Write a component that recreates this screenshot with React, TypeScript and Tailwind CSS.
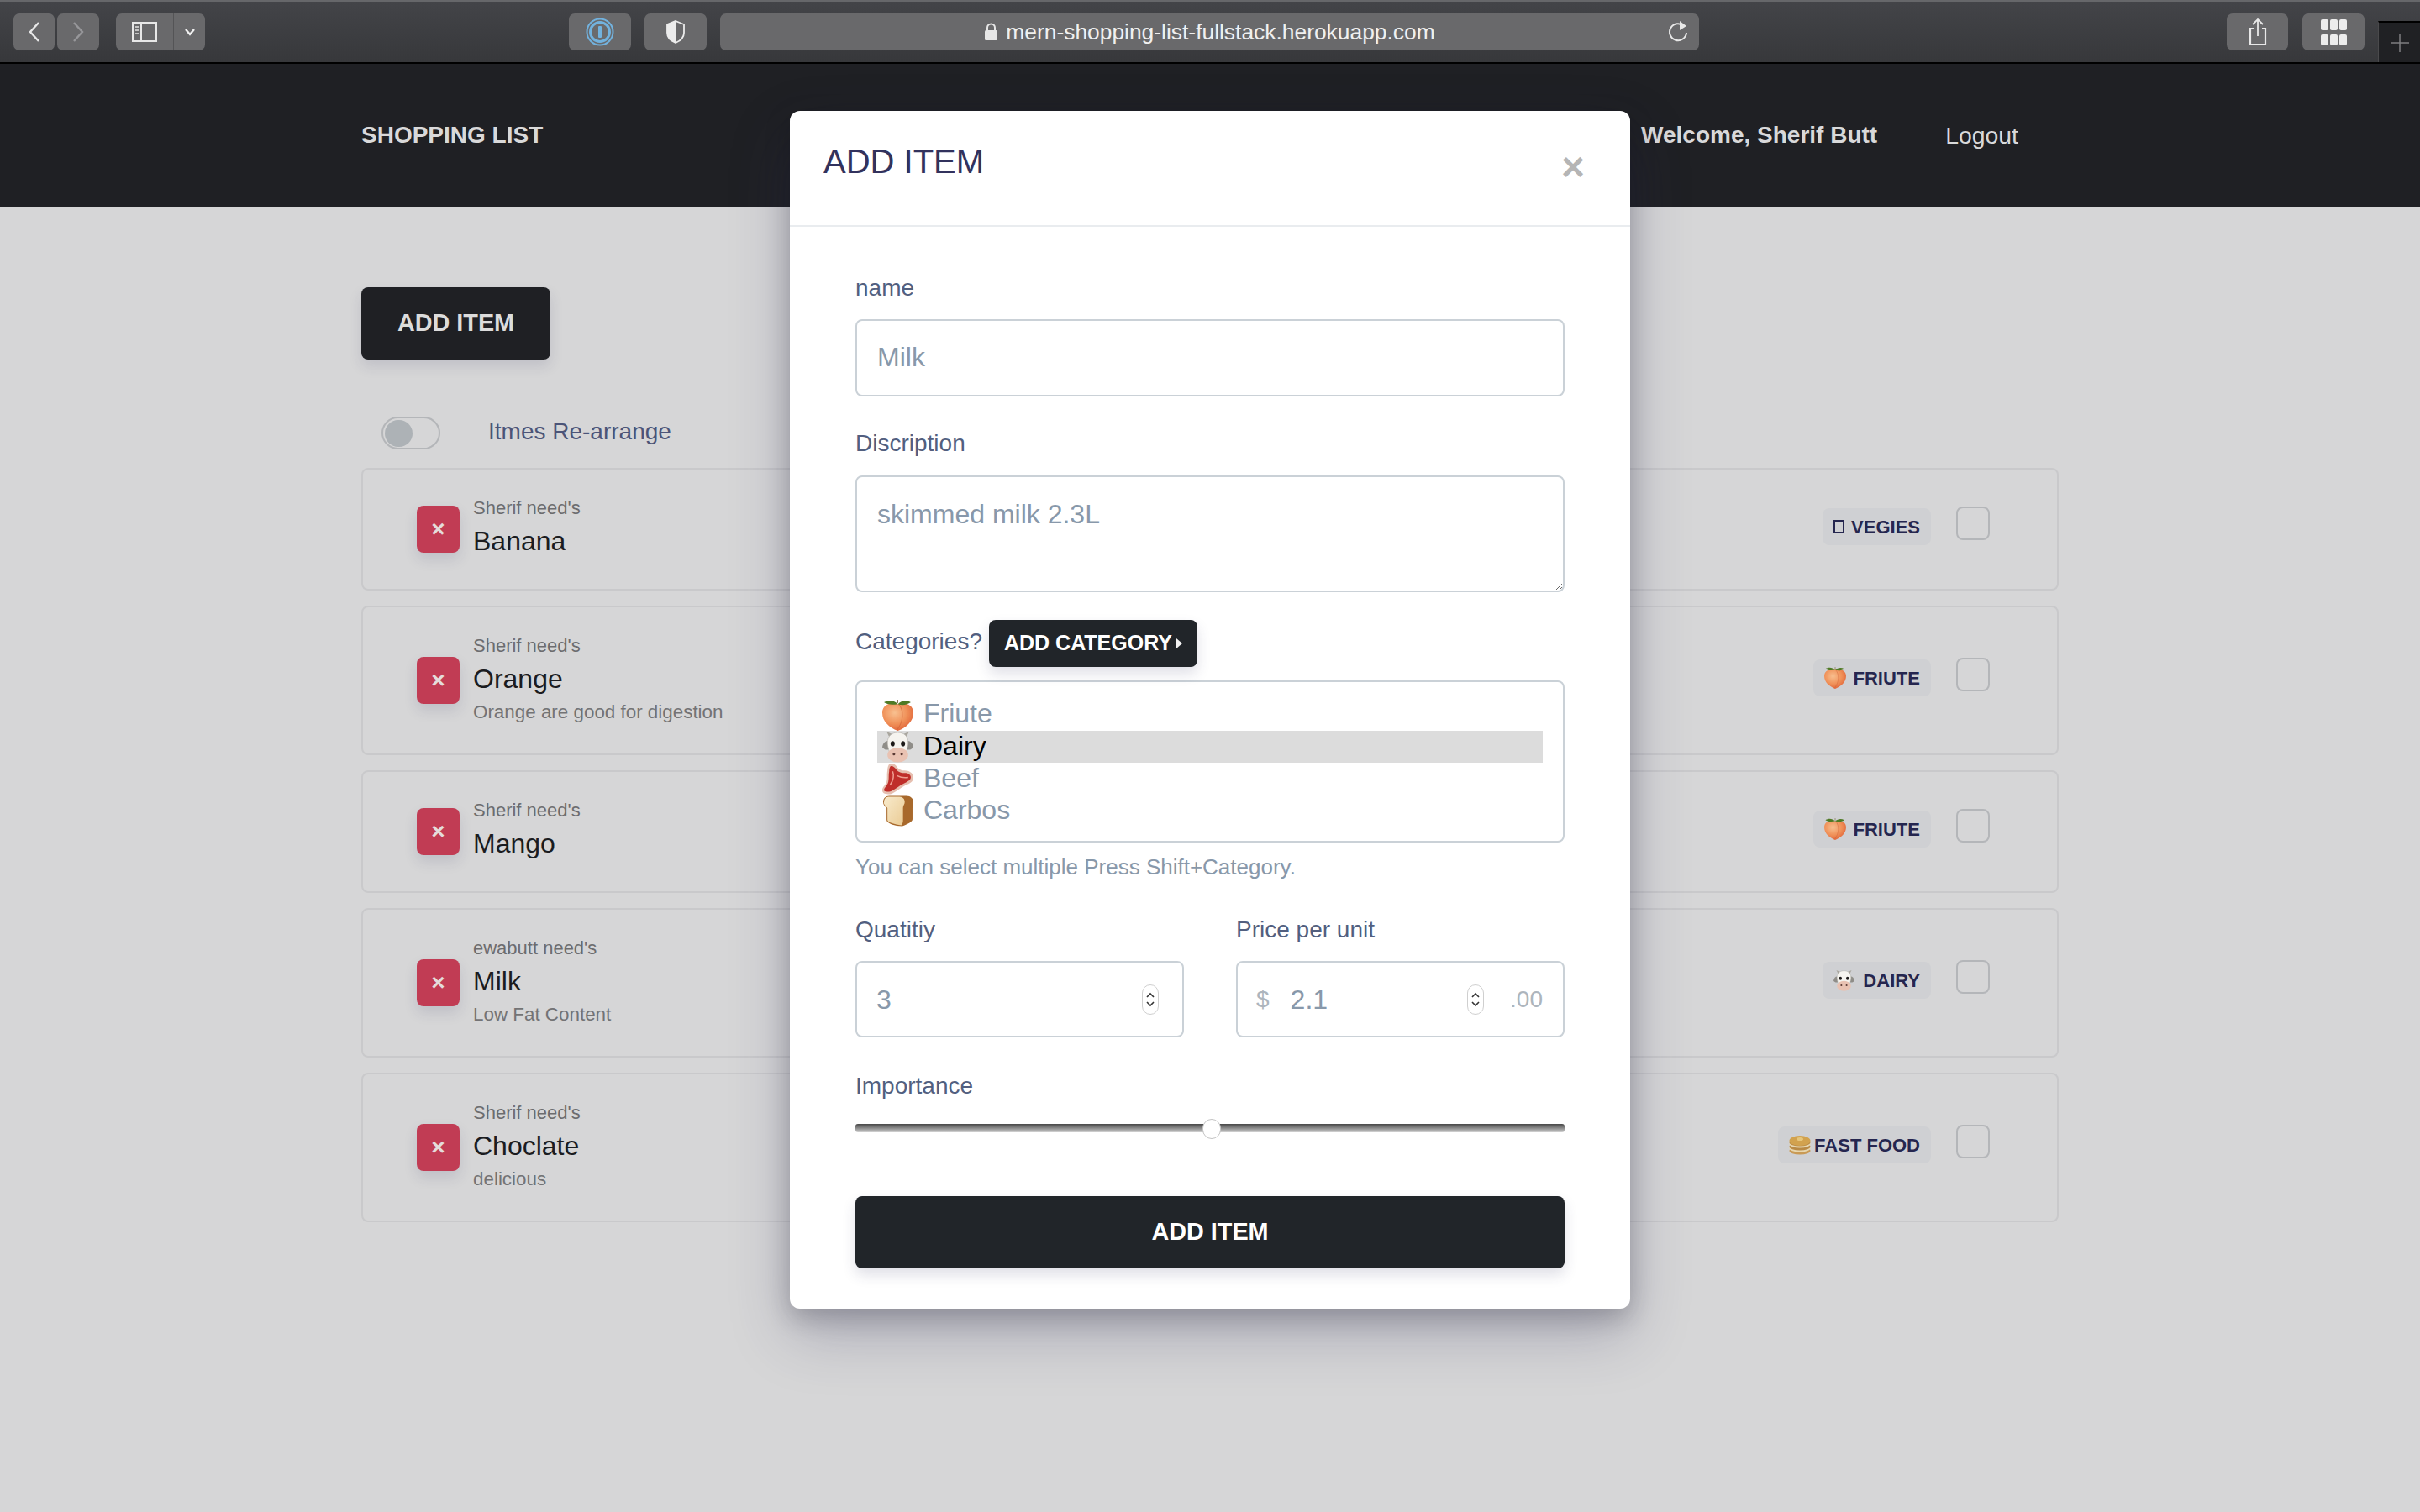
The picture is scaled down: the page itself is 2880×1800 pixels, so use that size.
import React from "react";

const btn = "h-[44px] rounded-[7px] bg-[#69696b] flex items-center justify-center";
const label = "block text-[28px] leading-[40px] text-[#525f7f]";
const field = "w-full rounded-lg border-2 border-[#cad1d7] bg-white text-[32px] text-[#8898aa] placeholder:text-[#8898aa] outline-none";

function Peach({ size = 37 }: { size?: number }) {
  return (
    <svg width={size} height={size} viewBox="0 0 36 36" className="shrink-0">
      <defs>
        <radialGradient id="peachFill" cx="0.4" cy="0.35" r="0.8">
          <stop offset="0" stopColor="#f8c090" />
          <stop offset="0.5" stopColor="#f09058" />
          <stop offset="1" stopColor="#d9512c" />
        </radialGradient>
      </defs>
      <path d="M18 36C8 32 0 25 0 15 0 6 9 2 18 5c9-3 18 1 18 10 0 10-8 17-18 21z" fill="url(#peachFill)" />
      <path d="M19 5c6 7 6 20-2 30" fill="none" stroke="#cf5f35" strokeWidth="1" opacity="0.6" />
      <path d="M2 3c5-3 11-3 16 2-6 1-12 1-16-2zM18 5c4-4 10-5 15-2-4 3-10 4-15 2z" fill="#4f7a25" />
      <path d="M18 0v4" stroke="#8a7a5a" strokeWidth="1" />
    </svg>
  );
}

function Cow({ size = 37 }: { size?: number }) {
  return (
    <svg width={size} height={size} viewBox="0 0 36 36" className="shrink-0">
      <path d="M9 8L5 0l9 4zM27 8l4-8-9 4z" fill="#a9a69e" />
      <path d="M8 11C4 10 1 13 0 18c3 4 7 4 11 0zM28 11c4-1 7 2 8 7-3 4-7 4-11 0z" fill="#8f8d88" />
      <path d="M18 1c7 0 12 4 12 12 0 3-1 6-2 10H8C7 19 6 16 6 13 6 5 11 1 18 1z" fill="#f6f4ef" stroke="#b0aea8" strokeWidth="0.6" />
      <ellipse cx="18" cy="27" rx="12" ry="8.500" fill="#e9c2b2" />
      <ellipse cx="12" cy="14" rx="2.400" ry="3" fill="#1d1a18" />
      <ellipse cx="24" cy="14" rx="2.400" ry="3" fill="#1d1a18" />
      <circle cx="13.500" cy="26" r="1.500" fill="#5a3a34" />
      <circle cx="22.500" cy="26" r="1.500" fill="#5a3a34" />
    </svg>
  );
}

function Steak() {
  return (
    <svg width={37} height={37} viewBox="0 0 36 36" className="shrink-0">
      <path d="M9 0c4-1 7 2 9 5 2 2 4 3 8 3 5 0 10 3 10 8 0 5-4 7-9 9-6 3-10 7-16 10-4 1-11 1-11-4 0-4 4-6 5-10 1-5 0-8 1-13 0-3 1-7 3-8z" fill="#e6bfb0" />
      <path d="M10 3c3 0 5 2 7 5 2 2 5 3 9 3 4 0 7 2 7 5 0 3-4 5-8 7-6 3-9 6-15 9-3 1-8 1-8-1 0-3 4-5 5-10 1-5 0-8 1-12 0-3 1-6 2-6z" fill="#bf2e2a" />
      <path d="M12 9c2 5 1 10-3 16M17 14c4 2 8 3 13 2" fill="none" stroke="#ee9d90" strokeWidth="1.500" />
    </svg>
  );
}

function Bread() {
  return (
    <svg width={37} height={38} viewBox="0 0 36 36" className="shrink-0">
      <defs>
        <linearGradient id="breadFill" x1="0" y1="0" x2="1" y2="1">
          <stop offset="0" stopColor="#f8eacb" />
          <stop offset="1" stopColor="#eacb94" />
        </linearGradient>
      </defs>
      <path d="M8 1h20c5 0 8 3 8 8 0 3-1 4-1 6v13c0 3-6 6-12 8-8 0-18-3-18-7V15C3 13 1 11 1 8c0-4 3-7 7-7z" fill="#a8692c" />
      <path d="M7 2h13c4 0 6 3 6 6 0 3-2 4-2 7v15c0 2-1 4-2 5-7-1-16-3-16-6V15C5 13 1 11 2 8c0-3 2-6 5-6z" fill="url(#breadFill)" />
    </svg>
  );
}

function Pancakes() {
  return (
    <svg width={26} height={24} viewBox="0 0 26 24" className="shrink-0">
      <ellipse cx="13" cy="19" rx="12.500" ry="4.500" fill="#c99a55" />
      <ellipse cx="13" cy="16" rx="12.500" ry="4.500" fill="#e7d6ae" />
      <ellipse cx="13" cy="14" rx="12.500" ry="4.500" fill="#b98a45" />
      <ellipse cx="13" cy="11" rx="12.500" ry="4.500" fill="#e7d6ae" />
      <ellipse cx="13" cy="9" rx="12.500" ry="4.500" fill="#b98a45" />
      <ellipse cx="13" cy="7" rx="12.500" ry="6" fill="#d2a24e" />
      <ellipse cx="13" cy="5" rx="4" ry="2" fill="#e6c67c" />
    </svg>
  );
}

function Badge({ icon, text, gap }: { icon: React.ReactNode; text: string; gap: string }) {
  return (
    <span className={`flex h-[44px] items-center rounded-lg bg-[#cfd0d3] pl-[13px] pr-[13px] text-[22px] font-bold uppercase text-[#25264f] mb-[6px] ${gap}`}>
      {icon}
      {text}
    </span>
  );
}

type Item = { who: string; name: string; note?: string; badge: React.ReactNode };

const items: Item[] = [
  {
    who: "Sherif need's",
    name: "Banana",
    badge: <Badge gap="gap-[8px]" text="Vegies" icon={<span className="h-[16px] w-[13px] border-2 border-[#25264f]" />} />,
  },
  {
    who: "Sherif need's",
    name: "Orange",
    note: "Orange are good for digestion",
    badge: <Badge gap="gap-[9px]" text="Friute" icon={<Peach size={26} />} />,
  },
  {
    who: "Sherif need's",
    name: "Mango",
    badge: <Badge gap="gap-[9px]" text="Friute" icon={<Peach size={26} />} />,
  },
  {
    who: "ewabutt need's",
    name: "Milk",
    note: "Low Fat Content",
    badge: <Badge gap="gap-[10px]" text="Dairy" icon={<Cow size={25} />} />,
  },
  {
    who: "Sherif need's",
    name: "Choclate",
    note: "delicious",
    badge: <Badge gap="gap-[4px]" text="Fast Food" icon={<Pancakes />} />,
  },
];

function Spinner() {
  return (
    <span className="flex h-[36px] w-[20px] shrink-0 flex-col items-center justify-center gap-[4px] rounded-full border border-[#cfcfcf] bg-white">
      <svg width="10" height="7" viewBox="0 0 10 7"><path d="M1 6l4-4 4 4" fill="none" stroke="#333" strokeWidth="1.6" /></svg>
      <svg width="10" height="7" viewBox="0 0 10 7"><path d="M1 1l4 4 4-4" fill="none" stroke="#333" strokeWidth="1.6" /></svg>
    </span>
  );
}

function Toolbar() {
  return (
    <div className="flex h-[76px] items-start border-b-2 border-black border-t-2 border-t-[#66676a] bg-linear-to-b from-[#434448] to-[#37383b] pt-[14px] pl-[16px]">
      <div className={`${btn} w-[49px]`}>
        <svg width="16" height="26" viewBox="0 0 16 26"><path d="M13 2L3 13l10 11" fill="none" stroke="#e8e8e8" strokeWidth="2.4" /></svg>
      </div>
      <div className={`${btn} ml-[3px] w-[50px]`}>
        <svg width="16" height="26" viewBox="0 0 16 26"><path d="M3 2l10 11L3 24" fill="none" stroke="#97979a" strokeWidth="2.4" /></svg>
      </div>
      <div className={`${btn} ml-[20px] w-[106px]`}>
        <div className="flex w-[69px] items-center justify-center border-r border-[#545456] h-full">
          <svg width="30" height="24" viewBox="0 0 30 24">
            <rect x="1" y="1" width="28" height="22" fill="none" stroke="#e8e8e8" strokeWidth="2" />
            <path d="M11 1v22" stroke="#e8e8e8" strokeWidth="2" />
            <path d="M4 6h4M4 10h4M4 14h4" stroke="#c4c4c4" strokeWidth="2" />
          </svg>
        </div>
        <div className="flex flex-1 items-center justify-center">
          <svg width="14" height="10" viewBox="0 0 14 10"><path d="M2 2l5 6 5-6" fill="none" stroke="#f0f0f0" strokeWidth="2.4" /></svg>
        </div>
      </div>
      <div className={`${btn} ml-[433px] w-[74px]`}>
        <svg width="34" height="34" viewBox="0 0 34 34">
          <circle cx="17" cy="17" r="15.500" fill="none" stroke="#72b2de" strokeWidth="2" />
          <circle cx="17" cy="17" r="11.500" fill="#6a6a6c" stroke="#72b2de" strokeWidth="3" />
          <rect x="15" y="10" width="4" height="14" rx="1" fill="#72b2de" />
        </svg>
      </div>
      <div className={`${btn} ml-[16px] w-[74px]`}>
        <svg width="24" height="28" viewBox="0 0 24 28">
          <path d="M12 1l10 4v10c0 6-5 10-10 12C7 25 2 21 2 15V5z" fill="#69696b" stroke="#ececec" strokeWidth="1.8" />
          <path d="M12 1L2 5v10c0 6 5 10 10 12z" fill="#ececec" />
        </svg>
      </div>
      <div className={`${btn} relative ml-[16px] w-[1165px] gap-[9px] text-[26.4px] text-[#f0f0f0]`}>
        <svg width="17" height="22" viewBox="0 0 17 22">
          <path d="M4 10V6a4.500 4.500 0 0 1 9 0v4" fill="none" stroke="#e6e6e6" strokeWidth="2" />
          <rect x="1" y="9" width="15" height="12" rx="1.500" fill="#e6e6e6" />
        </svg>
        <span className="pt-[2px]">mern-shopping-list-fullstack.herokuapp.com</span>
        <svg className="absolute right-[12px] top-[8px]" width="26" height="28" viewBox="0 0 26 28">
          <path d="M20 7a10 10 0 1 0 3 8" fill="none" stroke="#e8e8e8" strokeWidth="2" />
          <path d="M15 1l8 6-8 5z" fill="#e8e8e8" />
        </svg>
      </div>
      <div className={`${btn} ml-[628px] w-[73px]`}>
        <svg width="24" height="34" viewBox="0 0 24 34">
          <path d="M7 13H3v19h18V13h-4" fill="none" stroke="#e8e8e8" strokeWidth="2.200" />
          <path d="M12 22V2M6 8l6-6 6 6" fill="none" stroke="#e8e8e8" strokeWidth="1.800" />
        </svg>
      </div>
      <div className={`${btn} ml-[17px] w-[74px]`}>
        <div className="grid grid-cols-3 gap-x-[2px] gap-y-[5px]">
          {[0, 1, 2, 3, 4, 5].map((n) => (
            <span key={n} className="h-[13px] w-[9px] rounded-[2px] bg-[#ececec]" />
          ))}
        </div>
      </div>
      <div className="ml-[16px] mt-[9px] flex h-[49px] flex-1 items-center justify-center border-l border-t-2 border-l-[#4a4a4c] border-t-black bg-[#202124]">
        <svg width="24" height="24" viewBox="0 0 24 24"><path d="M12 1v22M1 12h22" stroke="#7d7e80" strokeWidth="1.500" /></svg>
      </div>
    </div>
  );
}

function Modal() {
  return (
    <div className="absolute left-[940px] top-[132px] w-[1000px] rounded-xl bg-white shadow-[0_30px_70px_rgba(50,50,93,0.28),0_10px_30px_rgba(0,0,0,0.22)]">
      <div className="flex h-[138px] items-start justify-between border-b-2 border-[#e9ecef] pl-[40px] pr-[54px] pt-[40px]">
        <h5 className="text-[40px] leading-[40px] text-[#32325d]">ADD ITEM</h5>
        <span className="text-[48px] font-bold leading-[54px] text-[#b5b5b5]">×</span>
      </div>
      <form className="px-[78px] pb-[48px] pt-[53px]">
        <label className={`${label} mb-[17px]`}>name</label>
        <input placeholder="Milk" className={`${field} h-[92px] px-[24px] pb-[2px]`} />
        <label className={`${label} mb-[18px] mt-[36px]`}>Discription</label>
        <textarea placeholder="skimmed milk 2.3L" className={`${field} block h-[139px] px-[24px] py-[23px] text-[32px] leading-[42px]`} />
        <div className="mt-[33px] flex items-center">
          <label className={`${label} mb-[4px] mr-[8px]`}>Categories?</label>
          <button type="button" className="flex h-[56px] w-[248px] items-center justify-center gap-[5px] rounded-lg bg-[#212529] text-[25px] font-bold text-white shadow-[0_8px_16px_rgba(50,50,93,0.15)]">
            ADD CATEGORY
            <svg width="7" height="12" viewBox="0 0 7 12"><path d="M0 0l7 6-7 6z" fill="#f2f2f2" /></svg>
          </button>
        </div>
        <div className="mt-[16px] h-[193px] rounded-lg border-2 border-[#cad1d7] px-[24px] py-[20px] text-[32px] leading-[38px] text-[#8898aa]">
          <div className="flex h-[38px] items-center gap-[12px] pl-[6px]"><Peach /><span className="mb-[4px]">Friute</span></div>
          <div className="flex h-[38px] items-center gap-[12px] bg-[#dcdcdc] pl-[6px] text-black"><Cow /><span className="mb-[3px]">Dairy</span></div>
          <div className="flex h-[38px] items-center gap-[12px] pl-[6px]"><Steak /><span className="mb-[3px]">Beef</span></div>
          <div className="flex h-[38px] items-center gap-[12px] pl-[6px]"><Bread /><span className="mb-[3px]">Carbos</span></div>
        </div>
        <p className="mt-[14px] text-[26px] leading-[30px] text-[#8898aa]">You can select multiple Press Shift+Category.</p>
        <div className="mt-[40px] grid grid-cols-2 gap-x-[62px]">
          <div>
            <label className={`${label} mb-[17px]`}>Quatitiy</label>
            <div className="flex h-[91px] items-center rounded-lg border-2 border-[#cad1d7] pl-[23px] pr-[28px]">
              <input placeholder="3" className="w-full min-w-0 flex-1 text-[32px] text-[#8898aa] placeholder:text-[#8898aa] outline-none" />
              <Spinner />
            </div>
          </div>
          <div>
            <label className={`${label} mb-[17px]`}>Price per unit</label>
            <div className="flex h-[91px] items-center rounded-lg border-2 border-[#cad1d7] pl-[22px] pr-[24px]">
              <span className="mr-[25px] text-[28px] text-[#adb5bd]">$</span>
              <input placeholder="2.1" className="w-full min-w-0 flex-1 text-[32px] text-[#8898aa] placeholder:text-[#8898aa] outline-none" />
              <Spinner />
              <span className="ml-[31px] text-[28px] text-[#adb5bd]">.00</span>
            </div>
          </div>
        </div>
        <label className={`${label} mt-[38px]`}>Importance</label>
        <div className="relative mt-[25px] h-[10px] rounded-[3px] bg-linear-to-b from-[#484848] to-[#d2d2d2]">
          <span className="absolute left-[413px] top-[-6px] h-[24px] w-[22px] rounded-full border border-[#c4c4c4] bg-white" />
        </div>
        <button type="button" className="mt-[76px] h-[86px] w-full rounded-lg bg-[#212529] text-[28.8px] font-bold text-white shadow-[0_8px_16px_rgba(50,50,93,0.15)]">
          ADD ITEM
        </button>
      </form>
    </div>
  );
}

export default function App() {
  return (
    <div className="relative min-h-screen bg-[#d6d6d7] font-['Liberation_Sans',Arial,sans-serif]">
      <Toolbar />
      <nav className="flex h-[170px] items-center justify-between bg-[#1f2024] px-[430px] text-[#d9d9da]">
        <span className="text-[28px] font-bold">SHOPPING LIST</span>
        <div className="flex items-center text-[28px]">
          <span className="font-bold">Welcome, Sherif Butt</span>
          <span className="ml-[81px] mr-[48px] text-[28.4px]">Logout</span>
        </div>
      </nav>
      <main className="mx-auto w-[2020px] pt-[96px]">
        <button type="button" className="h-[86px] w-[225px] rounded-lg bg-[#1f2024] text-[28.8px] font-bold text-[#dcdcdc] shadow-[0_8px_16px_rgba(50,50,93,0.13)]">
          ADD ITEM
        </button>
        <div className="mb-[22px] mt-[68px] flex h-[39px] items-center pl-[24px]">
          <span className="flex h-[39px] w-[70px] items-center rounded-full border-2 border-[#b4b6b9] pl-[2px]">
            <span className="h-[32px] w-[33px] rounded-full bg-[#adb2b6]" />
          </span>
          <span className="mb-[4px] ml-[57px] text-[28px] text-[#4b5478]">Itmes Re-arrange</span>
        </div>
        {items.map((item) => (
          <div key={item.name + item.who} className="mb-[18px] flex items-center justify-between rounded-lg border-2 border-[#c9c9cb] pl-[64px] pr-[80px]">
            <div className="flex items-center gap-[16px] py-[31px]">
              <span className="flex h-[56px] w-[51px] items-center justify-center rounded-lg bg-[#c13c54] text-[28px] font-bold text-[#e4dcdc] shadow-[0_8px_16px_rgba(50,50,93,0.13)]">×</span>
              <div>
                <div className="pt-[1px] text-[22px] leading-[27px] text-[#6c6c6e]">{item.who}</div>
                <div className="text-[32px] leading-[52px] text-[#1b1c1f]">{item.name}</div>
                {item.note && <div className="mb-[4px] text-[22.4px] leading-[28px] text-[#737375]">{item.note}</div>}
              </div>
            </div>
            <div className="flex items-center gap-[30px]">
              {item.badge}
              <span className="mb-[14px] h-[40px] w-[40px] rounded-lg border-2 border-[#b4b6b9]" />
            </div>
          </div>
        ))}
      </main>
      <Modal />
    </div>
  );
}
